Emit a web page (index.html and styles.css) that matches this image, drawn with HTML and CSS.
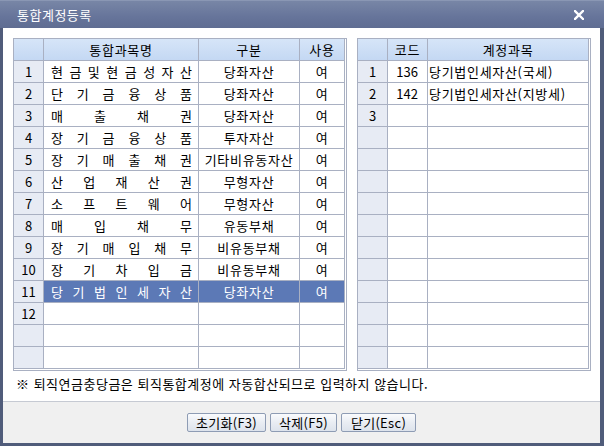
FILE: index.html
```html
<!DOCTYPE html>
<html lang="ko">
<head>
    <meta charset="UTF-8">
    <meta name="viewport" content="width=device-width, initial-scale=1.0">
    <title>통합계정등록</title>
    <link rel="stylesheet" href="styles.css">
</head>
<body>
    <div class="window">
        <div class="titlebar">
            <span class="title">통합계정등록</span>
            <svg class="close" width="10" height="10" viewBox="0 0 10 10">
                <path d="M1 1 L9 9 M9 1 L1 9" stroke="#fff" stroke-width="2.4" stroke-linecap="square"/>
            </svg>
        </div>

        <div class="dialog-body">
            <div class="main">
                <div class="panels">
                    <div class="panel panel-left">
                        <div class="grid grid-left">
                            <div class="hd"></div><div class="hd">통합과목명</div><div class="hd">구분</div><div class="hd">사용</div>

                            <div class="num">1</div><div class="dist">현 금 및 현 금 성 자 산</div><div class="c">당좌자산</div><div class="c">여</div>
                            <div class="num">2</div><div class="dist">단 기 금 융 상 품</div><div class="c">당좌자산</div><div class="c">여</div>
                            <div class="num">3</div><div class="dist">매 출 채 권</div><div class="c">당좌자산</div><div class="c">여</div>
                            <div class="num">4</div><div class="dist">장 기 금 융 상 품</div><div class="c">투자자산</div><div class="c">여</div>
                            <div class="num">5</div><div class="dist">장 기 매 출 채 권</div><div class="c">기타비유동자산</div><div class="c">여</div>
                            <div class="num">6</div><div class="dist">산 업 재 산 권</div><div class="c">무형자산</div><div class="c">여</div>
                            <div class="num">7</div><div class="dist">소 프 트 웨 어</div><div class="c">무형자산</div><div class="c">여</div>
                            <div class="num">8</div><div class="dist">매 입 채 무</div><div class="c">유동부채</div><div class="c">여</div>
                            <div class="num">9</div><div class="dist">장 기 매 입 채 무</div><div class="c">비유동부채</div><div class="c">여</div>
                            <div class="num">10</div><div class="dist">장 기 차 입 금</div><div class="c">비유동부채</div><div class="c">여</div>
                            <div class="num">11</div><div class="dist sel">당 기 법 인 세 자 산</div><div class="c sel">당좌자산</div><div class="c sel">여</div>
                            <div class="num">12</div><div></div><div></div><div></div>
                            <div class="num"></div><div></div><div></div><div></div>
                            <div class="num"></div><div></div><div></div><div></div>
                        </div>
                    </div>

                    <div class="panel panel-right">
                        <div class="grid grid-right">
                            <div class="hd"></div><div class="hd">코드</div><div class="hd">계정과목</div>

                            <div class="num">1</div><div class="code">136</div><div class="acct">당기법인세자산(국세)</div>
                            <div class="num">2</div><div class="code">142</div><div class="acct">당기법인세자산(지방세)</div>
                            <div class="num">3</div><div></div><div></div>
                            <div class="num"></div><div></div><div></div>
                            <div class="num"></div><div></div><div></div>
                            <div class="num"></div><div></div><div></div>
                            <div class="num"></div><div></div><div></div>
                            <div class="num"></div><div></div><div></div>
                            <div class="num"></div><div></div><div></div>
                            <div class="num"></div><div></div><div></div>
                            <div class="num"></div><div></div><div></div>
                            <div class="num"></div><div></div><div></div>
                            <div class="num"></div><div></div><div></div>
                            <div class="num"></div><div></div><div></div>
                        </div>
                    </div>
                </div>

                <p class="note">※ 퇴직연금충당금은 퇴직통합계정에 자동합산되므로 입력하지 않습니다.</p>
            </div>

            <div class="footer">
                <button class="btn btn-reset">초기화(F3)</button>
                <button class="btn btn-delete">삭제(F5)</button>
                <button class="btn btn-close">닫기(Esc)</button>
            </div>
        </div>
    </div>
</body>
</html>
```

FILE: styles.css
```css
body {
    margin: 0;
    font-family: "Noto Sans CJK KR", "Noto Sans", sans-serif;
    font-size: 13px;
    letter-spacing: 0.7px;
    color: #000;
}

.window {
    width: 604px;
    height: 446px;
    background: #505c7a;
    display: flex;
    flex-direction: column;
}

.titlebar {
    height: 28px;
    flex: none;
    display: flex;
    align-items: center;
    justify-content: space-between;
    padding: 0 20px 0 17px;
    background: linear-gradient(#7886a6, #66749a 60%, #5f6d92);
    border-top: 1px solid #8a97b4;
    box-sizing: border-box;
}

.titlebar .title {
    color: #fff;
    line-height: 14px;
    letter-spacing: 0.5px;
}

.dialog-body {
    flex: 1;
    margin: 0 4px 3px 3px;
    background: #fff;
    display: flex;
    flex-direction: column;
}

.main {
    height: 373px;
    padding: 10px 9px 0 10px;
    box-sizing: border-box;
}

.panels {
    display: flex;
    gap: 10px;
}

.panel {
    border: 1px solid #a9b0c2;
    padding: 0 1px 1px 0;
    background: #fff;
}

.grid {
    display: grid;
    grid-auto-rows: 21px;
    gap: 1px;
    background: #a9b0c2;
    padding: 0 1px 1px 0;
}

.grid-left {
    grid-template-columns: 29px 154px 100px 44px;
}

.grid-right {
    grid-template-columns: 29px 39px 160px;
}

.grid > div {
    background: #fff;
    line-height: 21px;
    white-space: nowrap;
    overflow: hidden;
}

.grid > .hd {
    background: linear-gradient(#d6e5f8, #c4d8f3);
    text-align: center;
}

.grid > .num {
    background: #e7ebf4;
    text-align: center;
    letter-spacing: 0;
}

.grid > .c {
    text-align: center;
}

.grid > .dist {
    text-align: justify;
    text-align-last: justify;
    letter-spacing: 0;
    padding: 0 6px 0 7px;
}

.grid > .sel {
    background: #5c79b6;
    color: #fff;
}

.grid > .code {
    text-align: right;
    letter-spacing: 0;
    padding-right: 9px;
}

.grid > .acct {
    padding-left: 1px;
}

.note {
    margin: 5px 0 0 3px;
    line-height: 16px;
    letter-spacing: 0.5px;
}

.footer {
    flex: 1;
    border-top: 1px solid #c6cad3;
    background: #f0f0f0;
    display: flex;
    justify-content: center;
    align-items: flex-start;
    gap: 4px;
    padding-top: 11px;
}

.btn {
    height: 19px;
    padding: 0;
    font-family: inherit;
    font-size: 13px;
    letter-spacing: 0.3px;
    line-height: 17px;
    color: #000;
    border: 1px solid #8e9cb4;
    border-radius: 2px;
    background: linear-gradient(#fafbfd, #e9edf3 50%, #dde3ec);
    cursor: pointer;
}

.btn-reset {
    width: 79px;
}

.btn-delete {
    width: 67px;
}

.btn-close {
    width: 75px;
}
```
